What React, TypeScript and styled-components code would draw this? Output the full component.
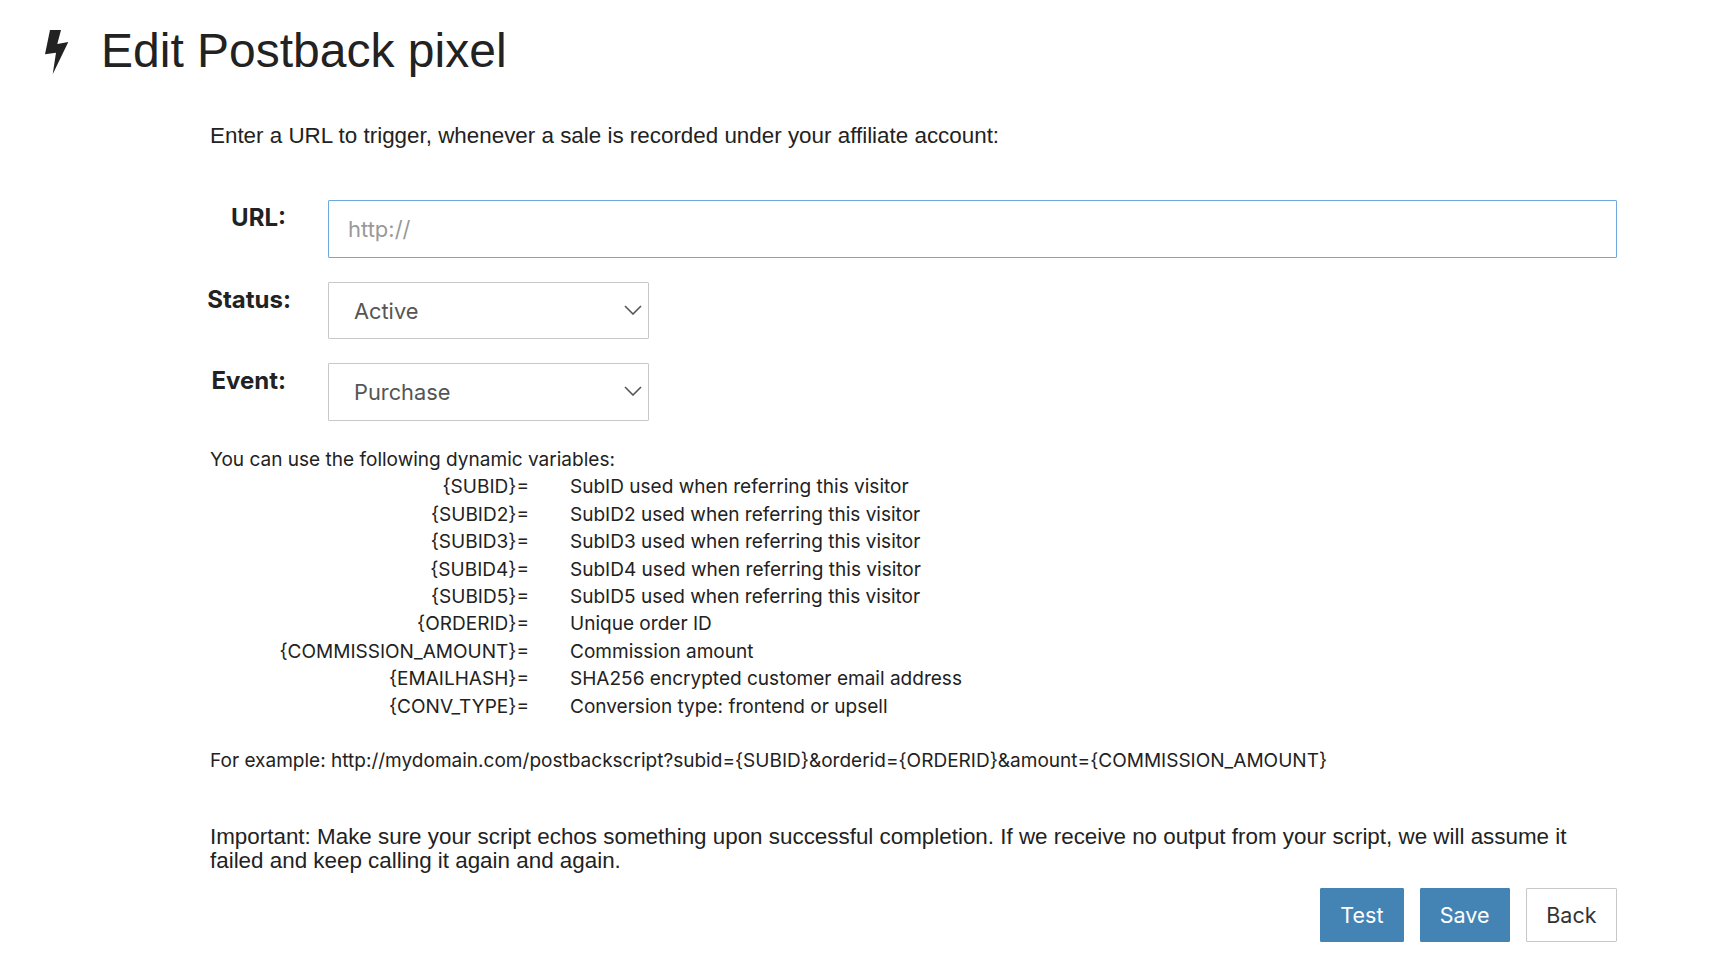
import { FC } from 'react';
import styled, { createGlobalStyle } from 'styled-components';

const variables = [
  ['{SUBID}=', 'SubID used when referring this visitor'],
  ['{SUBID2}=', 'SubID2 used when referring this visitor'],
  ['{SUBID3}=', 'SubID3 used when referring this visitor'],
  ['{SUBID4}=', 'SubID4 used when referring this visitor'],
  ['{SUBID5}=', 'SubID5 used when referring this visitor'],
  ['{ORDERID}=', 'Unique order ID'],
  ['{COMMISSION_AMOUNT}=', 'Commission amount'],
  ['{EMAILHASH}=', 'SHA256 encrypted customer email address'],
  ['{CONV_TYPE}=', 'Conversion type: frontend or upsell'],
];

const App: FC = () => {
  return (
    <Page>
      <GlobalStyle />
      <Header>
        <BoltIcon width="24" height="45" viewBox="0 0 24 45">
          <path d="M5 0h11l-3.7 14 11-2L7.7 44.3 11 22.7 0 24.3z" fill="#222" />
        </BoltIcon>
        <Title>Edit Postback pixel</Title>
      </Header>
      <Content>
        <Intro>Enter a URL to trigger, whenever a sale is recorded under your affiliate account:</Intro>
        <UrlRow>
          <Label>URL:</Label>
          <UrlInput placeholder="http://" />
        </UrlRow>
        <SelectRow>
          <Label $shift={5}>Status:</Label>
          <SelectBox>
            Active
            <Chevron />
          </SelectBox>
        </SelectRow>
        <SelectRow>
          <Label>Event:</Label>
          <SelectBox>
            Purchase
            <Chevron />
          </SelectBox>
        </SelectRow>
        <VarsTitle>You can use the following dynamic variables:</VarsTitle>
        <VarsTable>
          {variables.map(([key, desc]) => (
            <VarRow key={key}>
              <VarKey>{key}</VarKey>
              <span>{desc}</span>
            </VarRow>
          ))}
        </VarsTable>
        <Example>
          For example: http://mydomain.com/postbackscript?subid={'{SUBID}'}&amp;orderid={'{ORDERID}'}&amp;amount={'{COMMISSION_AMOUNT}'}
        </Example>
        <Important>
          Important: Make sure your script echos something upon successful completion. If we receive no output from your
          script, we will assume it failed and keep calling it again and again.
        </Important>
        <Actions>
          <Button $primary>Test</Button>
          <Button $primary>Save</Button>
          <Button>Back</Button>
        </Actions>
      </Content>
    </Page>
  );
};

const Chevron: FC = () => (
  <ChevronIcon width="18" height="10" viewBox="0 0 18 10">
    <path d="M1 1l8 8 8-8" fill="none" stroke="#555" strokeWidth="1.6" />
  </ChevronIcon>
);

const GlobalStyle = createGlobalStyle`
  html, body {
    margin: 0;
    background: #fff;
  }
  body {
    font-family: 'Inter', 'Liberation Sans', sans-serif;
    color: #222;
  }
`;

const Page = styled.div`
  width: 1732px;
  height: 976px;
  overflow: hidden;
  box-sizing: border-box;
`;

const Header = styled.div`
  display: flex;
  align-items: center;
  gap: 32px;
  padding: 15px 0 0 45px;
  height: 72px;
`;

const BoltIcon = styled.svg`
  margin-top: 2px;
`;

const Title = styled.h1`
  margin: 0;
  font: 400 48px/1 'Liberation Sans', Arial, sans-serif;
  color: #222;
`;

const Content = styled.div`
  width: 1407px;
  margin-left: 210px;
`;

const Intro = styled.p`
  margin: 36px 0 0;
  font: 400 22.4px/26px 'Liberation Sans', Arial, sans-serif;
`;

const UrlRow = styled.div`
  display: flex;
  height: 58px;
  margin-top: 51px;
`;

const SelectRow = styled.div`
  display: flex;
  height: 57px;
  margin-top: 24px;
  & + & {
    height: 58px;
  }
`;

const Label = styled.label<{ $shift?: number }>`
  display: flex;
  justify-content: flex-end;
  flex: 0 0 118px;
  min-width: 0;
  box-sizing: border-box;
  padding-top: 5px;
  padding-right: ${(p) => 42 - (p.$shift || 0)}px;
  white-space: nowrap;
  font: 700 24px/26px 'Inter', sans-serif;
`;

const UrlInput = styled.input`
  flex: 1;
  min-width: 0;
  box-sizing: border-box;
  padding: 0 19px;
  border: 1px solid #6fa8dc;
  border-radius: 1px;
  outline: none;
  font: 400 22px 'Inter', sans-serif;
  &::placeholder {
    color: #999;
  }
`;

const SelectBox = styled.div`
  position: relative;
  display: flex;
  align-items: center;
  width: 321px;
  box-sizing: border-box;
  padding-left: 25px;
  border: 1px solid #c8c8c8;
  border-radius: 1px;
  font-size: 21.8px;
  color: #555;
`;

const ChevronIcon = styled.svg`
  position: absolute;
  right: 6px;
  top: 22px;
`;

const VarsTitle = styled.div`
  margin-top: 25px;
  font-size: 19.05px;
  line-height: 27.4px;
`;

const VarsTable = styled.div`
  font-size: 19.05px;
  line-height: 27.4px;
`;

const VarRow = styled.div`
  display: grid;
  grid-template-columns: 319px 1fr;
  column-gap: 41px;
`;

const VarKey = styled.span`
  text-align: right;
`;

const Example = styled.div`
  margin-top: 27px;
  font-size: 19.05px;
  line-height: 27px;
`;

const Important = styled.p`
  margin: 51px 0 0;
  font: 400 22.4px/24px 'Liberation Sans', Arial, sans-serif;
`;

const Actions = styled.div`
  display: flex;
  justify-content: flex-end;
  gap: 16px;
  margin-top: 15px;
`;

const Button = styled.button<{ $primary?: boolean }>`
  height: 54px;
  padding: 0 ${(p) => (p.$primary ? '19.2px' : '19.5px')};
  box-sizing: border-box;
  border: 1px solid ${(p) => (p.$primary ? '#4484b4' : '#c8c8c8')};
  border-radius: 1px;
  background: ${(p) => (p.$primary ? '#4484b4' : '#fff')};
  color: ${(p) => (p.$primary ? '#fff' : '#333')};
  font: 400 21.5px 'Inter', sans-serif;
`;

export default App;
